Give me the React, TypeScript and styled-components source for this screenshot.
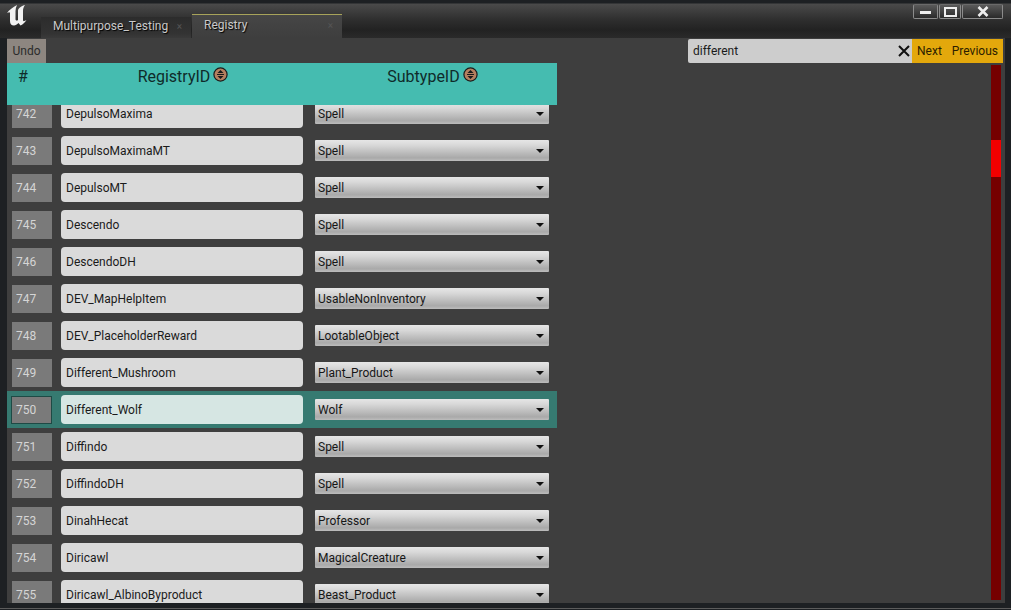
import React from 'react';
import styled, { createGlobalStyle } from 'styled-components';

const GlobalStyle = createGlobalStyle`
  html, body {
    margin: 0;
    padding: 0;
    background: #1d2023;
    overflow: hidden;
  }
`;

const rows: [number, string, string][] = [
  [742, 'DepulsoMaxima', 'Spell'],
  [743, 'DepulsoMaximaMT', 'Spell'],
  [744, 'DepulsoMT', 'Spell'],
  [745, 'Descendo', 'Spell'],
  [746, 'DescendoDH', 'Spell'],
  [747, 'DEV_MapHelpItem', 'UsableNonInventory'],
  [748, 'DEV_PlaceholderReward', 'LootableObject'],
  [749, 'Different_Mushroom', 'Plant_Product'],
  [750, 'Different_Wolf', 'Wolf'],
  [751, 'Diffindo', 'Spell'],
  [752, 'DiffindoDH', 'Spell'],
  [753, 'DinahHecat', 'Professor'],
  [754, 'Diricawl', 'MagicalCreature'],
  [755, 'Diricawl_AlbinoByproduct', 'Beast_Product'],
];

const Window = styled.div`
  width: 1011px;
  height: 610px;
  display: flex;
  flex-direction: column;
  background: #1d2023;
  box-shadow: inset 0 -1px 0 #1d2023, inset 0 -2px 0 #5c5c5c;
  font-family: Roboto, 'Liberation Sans', sans-serif;
  overflow: hidden;
`;

const TitleBar = styled.div`
  height: 38px;
  flex: none;
  display: flex;
  padding: 4px 7px 0 7px;
  box-sizing: border-box;
  background: linear-gradient(#1d2023 0, #1d2023 3px, #4a4a4a 4px, #2e2e2e 20px, #222 30px, #2a2a2a 38px);
`;

const Logo = styled.svg`
  width: 20px;
  height: 24px;
  flex: none;
  margin: 0 14px 0 0;
`;

const Tab = styled.div<{ $active?: boolean }>`
  width: 150px;
  height: ${p => (p.$active ? 24 : 21)}px;
  margin-top: ${p => (p.$active ? 10 : 13)}px;
  margin-right: 1px;
  box-sizing: border-box;
  display: flex;
  align-items: center;
  justify-content: space-between;
  padding: 0 9px 3px 12px;
  font-size: 12px;
  color: #c9c9c9;
  text-shadow: 1px 1px 1px #000;
  border-top: ${p => (p.$active ? '1px solid #a7a35a' : 'none')};
  background: ${p =>
    p.$active ? 'linear-gradient(#464646, #3e3e3e)' : 'linear-gradient(#2c2c2c, #333 80%, #3a3a3a)'};
`;

const TabClose = styled.span`
  font-size: 10px;
  color: #555;
  text-shadow: none;
`;

const WindowButtons = styled.div`
  margin-left: auto;
  margin-right: 1px;
  display: flex;
  height: 15px;
  gap: 1px;
`;

const WindowButton = styled.div<{ $w: number }>`
  width: ${p => p.$w}px;
  box-sizing: border-box;
  display: flex;
  align-items: center;
  justify-content: center;
  border: 1px solid #8b8b8b;
  border-top-color: #6a6a6a;
  border-radius: 2px;
  background: linear-gradient(#5a5a5a, #2a2a2a);
`;

const Body = styled.div`
  flex: 1;
  min-height: 0;
  margin: 0 6px 7px 7px;
  background: #3e3e3e;
  display: flex;
  flex-direction: column;
`;

const TopRow = styled.div`
  height: 25px;
  flex: none;
  display: flex;
  padding: 1px 2px 0 0;
  box-sizing: border-box;
`;

const UndoButton = styled.div`
  width: 39px;
  display: flex;
  align-items: center;
  justify-content: center;
  background: #8d8680;
  color: #2b2b2b;
  font-size: 12px;
`;

const SearchBox = styled.div`
  margin-left: auto;
  width: 224px;
  display: flex;
  align-items: center;
  justify-content: space-between;
  padding: 0 1px 0 5px;
  box-sizing: border-box;
  background: #cdcdcd;
  border-radius: 2px 0 0 2px;
  color: #1a1a1a;
  font-size: 12px;
`;

const SearchActions = styled.div`
  width: 91px;
  display: flex;
  align-items: center;
  justify-content: space-between;
  padding: 0 5px 0 5px;
  box-sizing: border-box;
  background: #e3a80c;
  color: #2c1d00;
  font-size: 12px;
`;

const Main = styled.div`
  flex: 1;
  min-height: 0;
  display: flex;
`;

const Table = styled.div`
  width: 550px;
  flex: none;
  display: flex;
  flex-direction: column;
`;

const HeaderRow = styled.div`
  height: 42px;
  flex: none;
  position: relative;
  z-index: 1;
  display: grid;
  grid-template-columns: 32px 288px 211px;
  background: #45bcb0;
  color: #0f2b2a;
  font-size: 16px;
`;

const HeaderCell = styled.div`
  display: flex;
  justify-content: center;
  gap: 3px;
  padding-top: 4px;
  height: 20px;
  line-height: 20px;
`;

const SortIcon = styled.svg`
  width: 15px;
  height: 15px;
`;

const ListViewport = styled.div`
  flex: 1;
  min-height: 0;
  overflow: hidden;
`;

const List = styled.div`
  margin-top: -10px;
  display: flex;
  flex-direction: column;
`;

const Row = styled.div<{ $selected?: boolean }>`
  height: 37px;
  flex: none;
  box-sizing: border-box;
  display: flex;
  align-items: center;
  padding-left: ${p => (p.$selected ? 4 : 5)}px;
  background: ${p => (p.$selected ? '#367a71' : 'transparent')};
`;

const IndexCell = styled.div<{ $selected?: boolean }>`
  width: ${p => (p.$selected ? 41 : 40)}px;
  height: 28px;
  box-sizing: border-box;
  display: flex;
  align-items: center;
  padding-left: 4px;
  background: #7a7a7a;
  color: #d5d5d5;
  font-size: 12px;
  border: ${p => (p.$selected ? '1px solid #1e4a45' : 'none')};
`;

const NameField = styled.div<{ $selected?: boolean }>`
  width: 242px;
  height: 29px;
  margin-left: 9px;
  box-sizing: border-box;
  display: flex;
  align-items: center;
  padding-left: 5px;
  background: ${p => (p.$selected ? '#d6e6e3' : '#dadada')};
  border-radius: 4px;
  color: #1a1a1a;
  font-size: 12px;
`;

const SelectField = styled.div`
  width: 234px;
  height: 21px;
  margin-left: 12px;
  box-sizing: border-box;
  display: flex;
  align-items: center;
  justify-content: space-between;
  padding: 0 5px 0 3px;
  background: linear-gradient(#e6e6e6, #d8d8d8 25%, #a9a9a9 85%, #bcbcbc);
  border-radius: 1px;
  color: #161616;
  font-size: 12px;
`;

const Caret = styled.span`
  width: 0;
  height: 0;
  border-left: 4px solid transparent;
  border-right: 4px solid transparent;
  border-top: 4px solid #111;
`;

const Track = styled.div`
  width: 10px;
  flex: none;
  margin: 2px 4px 3px auto;
  background: #750000;
  display: flex;
  flex-direction: column;
`;

const Thumb = styled.div`
  height: 37px;
  margin-top: 75px;
  background: #f30000;
`;

const SortGlyph = () => (
  <SortIcon viewBox="0 0 15 15">
    <circle cx="7.5" cy="7.5" r="6.6" fill="#b5805f" stroke="#1b1b1b" strokeWidth="1.2" />
    <path d="M7.5 3 10.5 6H4.5Z M4.5 9H10.5L7.5 12Z" fill="#1b1b1b" />
    <rect x="4" y="7" width="7" height="1" fill="#1b1b1b" />
  </SortIcon>
);

const App: React.FC = () => {
  return (
    <Window>
      <GlobalStyle />
      <TitleBar>
        <Logo viewBox="0 -1 20 24">
          <path
            d="M0 8C2 5 6 2 10 0 9 2 8.5 4 8.5 6V14C8.5 15.5 9.5 16 11 15V6C11 3.5 13 1.5 18 0 16.5 2 16 4 16 6V15C16 16.5 17 16.5 19.5 15 17.5 18 15.5 19.5 13.5 20.5L11.5 18C10 19.5 8.5 20.5 7 20.5 4.5 20.5 3 19 3 16V8C3 7 2 7 0 8Z"
            fill="#f1f1f1"
          />
        </Logo>
        <Tab>
          Multipurpose_Testing
          <TabClose>×</TabClose>
        </Tab>
        <Tab $active>
          Registry
          <TabClose>×</TabClose>
        </Tab>
        <WindowButtons>
          <WindowButton $w={25}>
            <svg width="11" height="4" viewBox="0 0 11 4">
              <rect width="11" height="3" y="1" fill="#eee" />
            </svg>
          </WindowButton>
          <WindowButton $w={22}>
            <svg width="13" height="10" viewBox="0 0 13 10">
              <rect x="1" y="1" width="11" height="8" fill="none" stroke="#eee" strokeWidth="2" />
            </svg>
          </WindowButton>
          <WindowButton $w={41}>
            <svg width="12" height="11" viewBox="0 0 12 11">
              <path d="M1.5 1 10.5 10M10.5 1 1.5 10" stroke="#eee" strokeWidth="2.6" />
            </svg>
          </WindowButton>
        </WindowButtons>
      </TitleBar>
      <Body>
        <TopRow>
          <UndoButton>Undo</UndoButton>
          <SearchBox>
            different
            <svg width="14" height="14" viewBox="0 0 14 14">
              <path d="M2 2 12 12M12 2 2 12" stroke="#111" strokeWidth="2" />
            </svg>
          </SearchBox>
          <SearchActions>
            <span>Next</span>
            <span>Previous</span>
          </SearchActions>
        </TopRow>
        <Main>
          <Table>
            <HeaderRow>
              <HeaderCell>#</HeaderCell>
              <HeaderCell>
                RegistryID
                <SortGlyph />
              </HeaderCell>
              <HeaderCell>
                SubtypeID
                <SortGlyph />
              </HeaderCell>
            </HeaderRow>
            <ListViewport>
              <List>
                {rows.map(([index, name, subtype]) => {
                  const selected = index === 750;
                  return (
                    <Row key={index} $selected={selected}>
                      <IndexCell $selected={selected}>{index}</IndexCell>
                      <NameField $selected={selected}>{name}</NameField>
                      <SelectField>
                        {subtype}
                        <Caret />
                      </SelectField>
                    </Row>
                  );
                })}
              </List>
            </ListViewport>
          </Table>
          <Track>
            <Thumb />
          </Track>
        </Main>
      </Body>
    </Window>
  );
};

export default App;
